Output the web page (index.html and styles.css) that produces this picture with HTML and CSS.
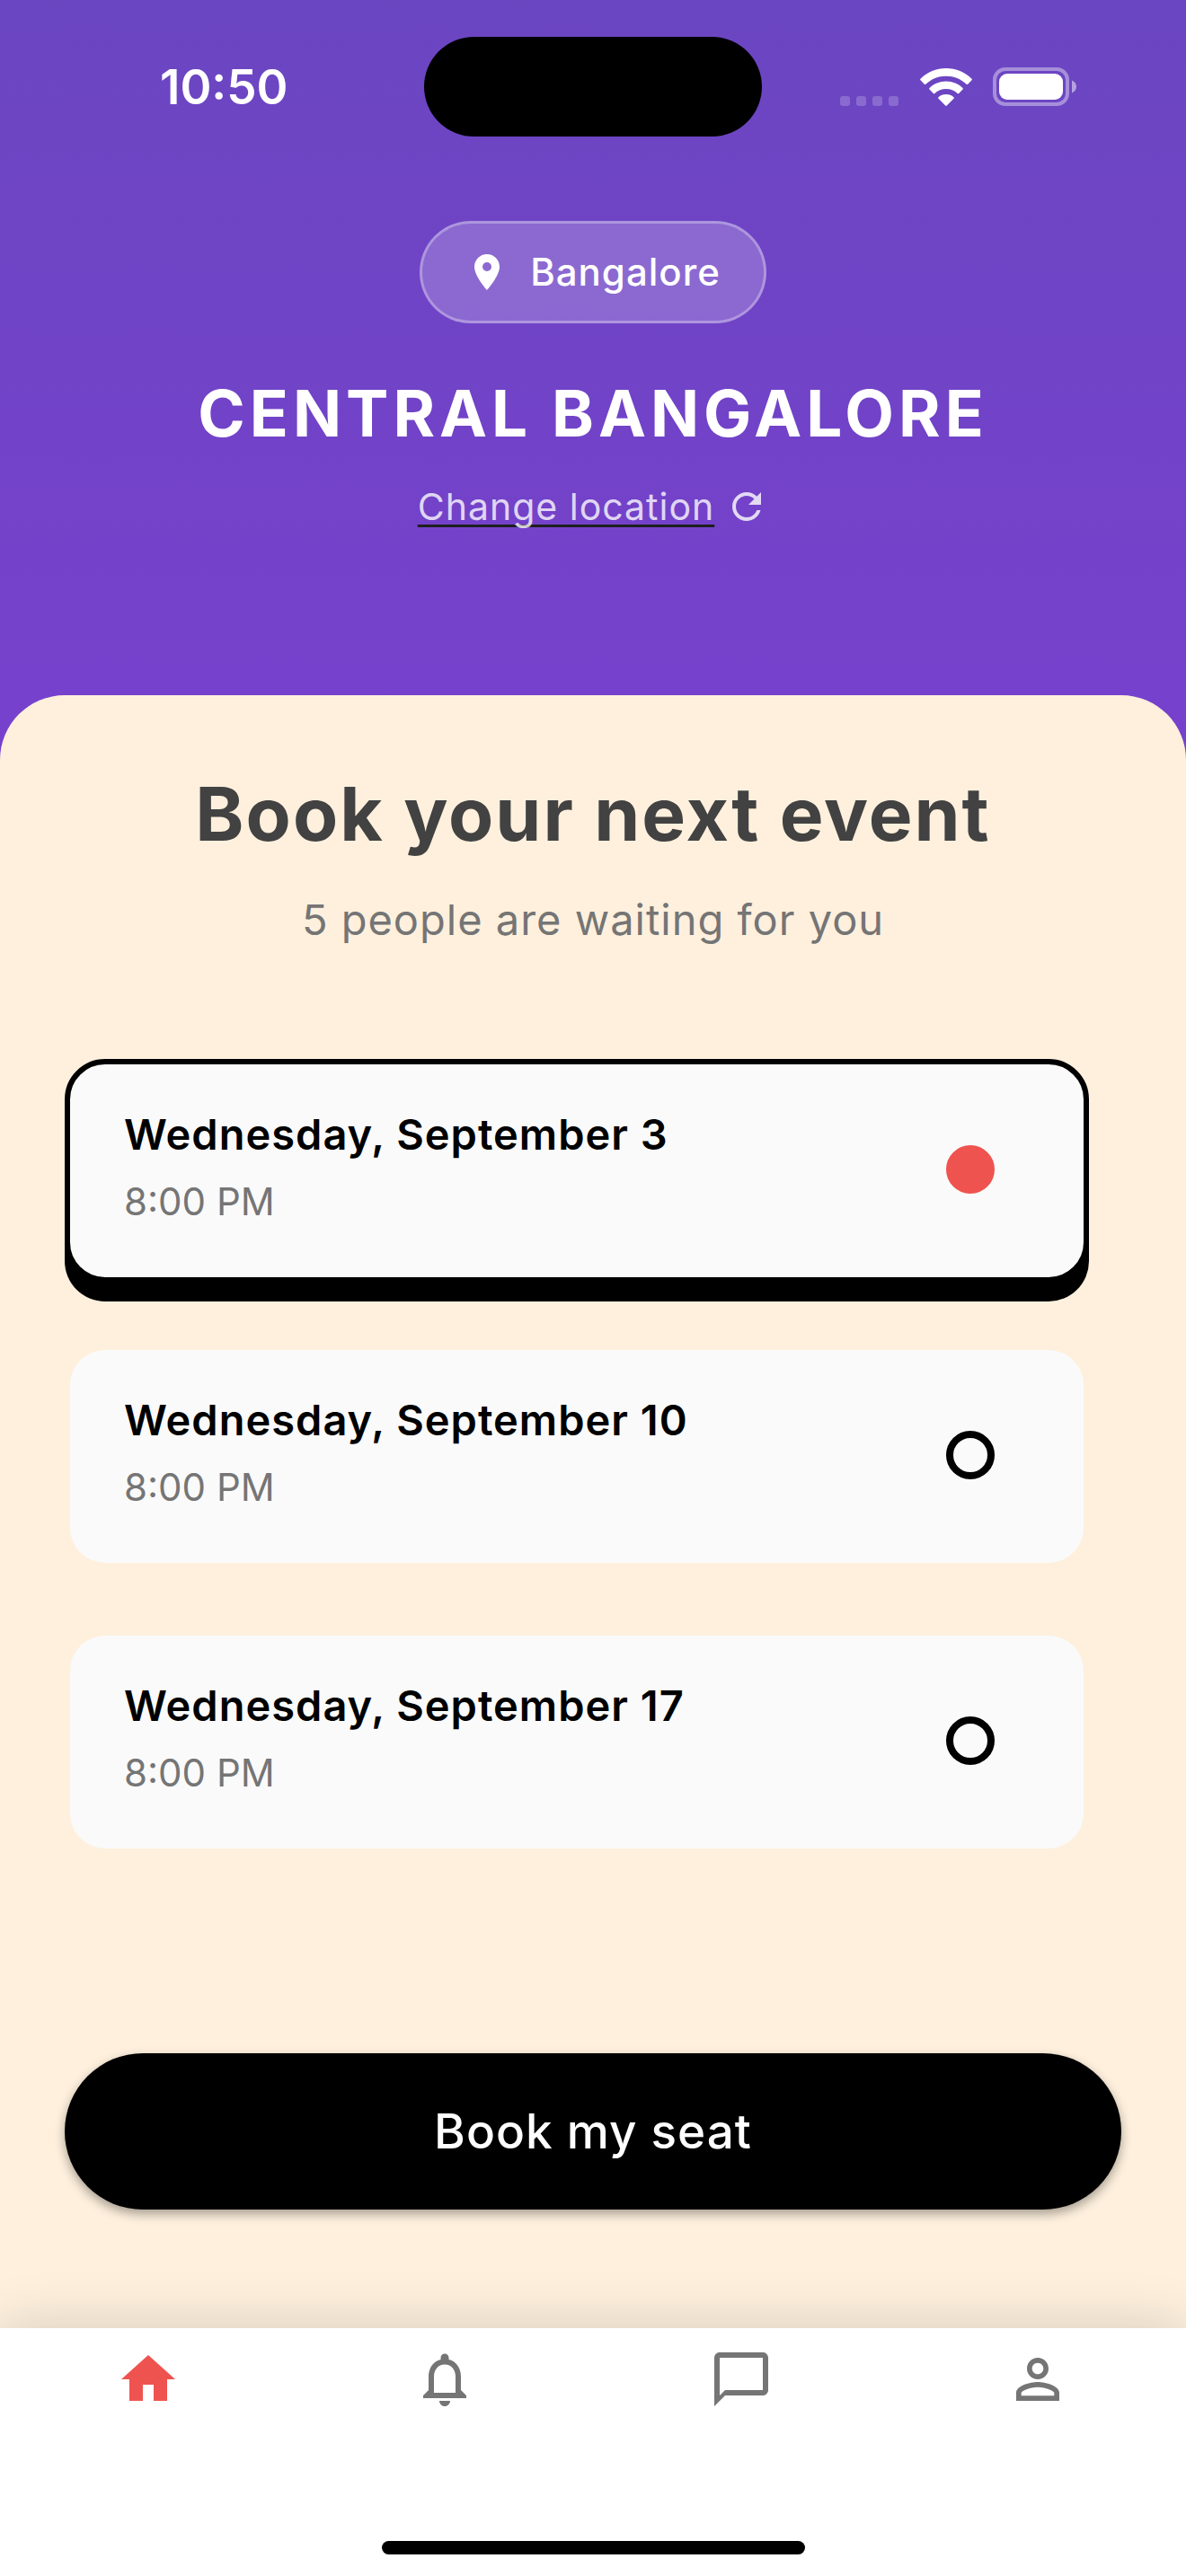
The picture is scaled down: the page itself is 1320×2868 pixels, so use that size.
FILE: index.html
```html
<!DOCTYPE html>
<html lang="en">
<head>
<meta charset="utf-8">
<meta name="viewport" content="width=device-width, initial-scale=1">
<title>Book your next event</title>
<link rel="stylesheet" href="styles.css">
</head>
<body>
<div class="screen">
  <div class="status">
    <time class="status-time">10:50</time>
    <span class="island"></span>
    <div class="status-icons">
      <svg class="signal" viewBox="0 0 66 11" aria-hidden="true"><rect width="11" height="11" rx="3"/><rect x="18" width="11" height="11" rx="3"/><rect x="36" width="11" height="11" rx="3"/><rect x="54" width="11" height="11" rx="3"/></svg>
      <svg class="wifi" viewBox="0 0 58 42" aria-hidden="true"><path d="M29 0C40 0 50 4.300 57.500 11.700Q58.300 12.500 57.500 13.300L53.200 17.700Q52.400 18.500 51.600 17.700C45.500 11.900 37.600 8.700 29 8.700S12.500 11.900 6.400 17.700Q5.600 18.500 4.800 17.700L.5 13.300Q-.3 12.500 .5 11.700C8 4.300 18 0 29 0zM29 14.500C36.200 14.500 42.700 17.300 47.500 21.900Q48.300 22.700 47.500 23.500L43.200 27.900Q42.400 28.700 41.600 27.900C38.200 24.900 33.800 23.100 29 23.100S19.800 24.900 16.400 27.900Q15.600 28.700 14.800 27.900L10.500 23.500Q9.700 22.700 10.500 21.900C15.300 17.300 21.800 14.500 29 14.500zM29 29C32.400 29 35.300 30.200 37.500 32.200Q38.300 33 37.500 33.800L29.800 41.500Q29 42.300 28.200 41.500L20.500 33.800Q19.700 33 20.500 32.200C22.700 30.200 25.600 29 29 29z"/></svg>
      <svg class="battery" viewBox="0 0 94 43" aria-hidden="true"><rect class="battery-shell" x="2" y="2" width="81" height="39" rx="12"/><rect x="7" y="7" width="71" height="29" rx="9"/><path class="battery-tip" d="M88 14.500c3 1.200 5 3.900 5 7s-2 5.800-5 7z"/></svg>
    </div>
  </div>

  <header class="header">
    <div class="pill">
      <svg class="icon-small" viewBox="0 0 24 24" aria-hidden="true"><path d="M12 2C8.130 2 5 5.130 5 9c0 5.250 7 13 7 13s7-7.750 7-13c0-3.870-3.130-7-7-7zm0 9.500a2.500 2.500 0 0 1 0-5 2.500 2.500 0 0 1 0 5z"/></svg>
      <span class="pill-text">Bangalore</span>
    </div>
    <h1 class="area">CENTRAL BANGALORE</h1>
    <a class="change" href="#location">
      <span class="change-text">Change location</span>
      <svg class="icon-small" viewBox="0 0 24 24" aria-hidden="true"><path d="M17.650 6.350C16.200 4.900 14.210 4 12 4c-4.420 0-7.990 3.580-7.990 8s3.570 8 7.990 8c3.730 0 6.840-2.550 7.730-6h-2.080c-.820 2.330-3.040 4-5.650 4-3.310 0-6-2.690-6-6s2.690-6 6-6c1.660 0 3.140.690 4.220 1.780L13 11h7V4l-2.350 2.350z"/></svg>
    </a>
  </header>

  <main class="panel">
    <h2 class="title">Book your next event</h2>
    <p class="subtitle">5 people are waiting for you</p>

    <form class="form">
      <div class="slots">
        <label class="slot">
          <span class="slot-info"><span class="slot-date">Wednesday, September 3</span><span class="slot-time">8:00 PM</span></span>
          <input class="slot-radio" type="radio" name="slot" checked>
        </label>
        <label class="slot">
          <span class="slot-info"><span class="slot-date">Wednesday, September 10</span><span class="slot-time">8:00 PM</span></span>
          <input class="slot-radio" type="radio" name="slot">
        </label>
        <label class="slot">
          <span class="slot-info"><span class="slot-date">Wednesday, September 17</span><span class="slot-time">8:00 PM</span></span>
          <input class="slot-radio" type="radio" name="slot">
        </label>
      </div>
      <button class="book" type="button">Book my seat</button>
    </form>
  </main>

  <footer class="bottom">
    <nav class="tabs">
      <a class="tab tab-active" href="#home" aria-label="Home"><svg class="icon" viewBox="0 0 24 24"><path d="M10 20v-6h4v6h5v-8h3L12 3 2 12h3v8z"/></svg></a>
      <a class="tab" href="#notifications" aria-label="Notifications"><svg class="icon" viewBox="0 0 24 24"><path d="M12 22c1.100 0 2-.900 2-2h-4c0 1.100.900 2 2 2zm6-6v-5c0-3.070-1.630-5.640-4.500-6.320V4c0-.830-.670-1.500-1.500-1.500s-1.500.670-1.500 1.500v.680C7.640 5.360 6 7.920 6 11v5l-2 2v1h16v-1l-2-2zm-2 1H8v-6c0-2.480 1.510-4.500 4-4.500s4 2.020 4 4.500v6z"/></svg></a>
      <a class="tab" href="#messages" aria-label="Messages"><svg class="icon" viewBox="0 0 24 24"><path d="M20 2H4c-1.100 0-2 .900-2 2v18l4-4h14c1.100 0 2-.900 2-2V4c0-1.100-.900-2-2-2zm0 14H6l-2 2V4h16v12z"/></svg></a>
      <a class="tab" href="#profile" aria-label="Profile"><svg class="icon" viewBox="0 0 24 24"><path d="M12 5.900c1.160 0 2.100.940 2.100 2.100s-.940 2.100-2.100 2.100S9.900 9.160 9.900 8s.940-2.100 2.100-2.100m0 9c2.970 0 6.100 1.460 6.100 2.100v1.100H5.900V17c0-.640 3.130-2.100 6.100-2.100M12 4C9.790 4 8 5.790 8 8s1.790 4 4 4 4-1.790 4-4-1.790-4-4-4zm0 9c-2.670 0-8 1.340-8 4v3h16v-3c0-2.660-5.330-4-8-4z"/></svg></a>
    </nav>
    <span class="home-bar"></span>
  </footer>
</div>
</body>
</html>
```

FILE: styles.css
```css
* {
  box-sizing: border-box;
}

body {
  margin: 0;
  font-family: Inter, "Liberation Sans", sans-serif;
}

.screen {
  display: flex;
  flex-direction: column;
  min-height: 100vh;
  background: linear-gradient(#6b46c1, #9333ea);
}

/* Status bar */
.status {
  display: grid;
  grid-template-columns: 1fr auto 1fr;
  align-items: center;
  height: 177px;
  padding: 16px 121px 0;
  color: #fff;
}

.status-time {
  padding-left: 57px;
  font-size: 53px;
  font-weight: 600;
  line-height: 60px;
}

.island {
  width: 376px;
  height: 111px;
  border-radius: 56px;
  background: #000;
}

.status-icons {
  display: flex;
  justify-content: flex-end;
  align-items: flex-end;
  gap: 23px;
  fill: #fff;
}

.signal {
  width: 66px;
  height: 11px;
  opacity: 0.2;
}

.wifi {
  width: 58px;
  height: 42px;
}

.battery {
  width: 94px;
  height: 43px;
}

.battery-shell {
  fill: none;
  stroke: #fff;
  stroke-width: 4;
  opacity: 0.4;
}

.battery-tip {
  opacity: 0.5;
}

/* Location header */
.header {
  display: flex;
  flex-direction: column;
  align-items: center;
  padding: 69px 72px 186px;
  color: #fff;
}

.icon-small {
  width: 48px;
  height: 48px;
  fill: currentColor;
}

.pill {
  display: flex;
  align-items: center;
  gap: 24px;
  padding: 27px 48px;
  border: 3px solid rgba(255, 255, 255, 0.3);
  border-radius: 60px;
  background: rgba(255, 255, 255, 0.2);
}

.pill-text {
  font-size: 42px;
  font-weight: 500;
  line-height: 54px;
  letter-spacing: 1px;
}

.area {
  margin: 56px 0 36px;
  font-size: 71px;
  font-weight: 700;
  line-height: 88px;
  letter-spacing: 5px;
  text-align: center;
}

.change {
  display: flex;
  align-items: center;
  gap: 12px;
  color: rgba(255, 255, 255, 0.8);
  text-decoration: none;
}

.change-text {
  font-size: 41px;
  line-height: 48px;
  letter-spacing: 1px;
  text-decoration: underline 3px #1f1f1f;
  text-decoration-skip-ink: none;
  text-underline-offset: 5px;
}

/* Booking panel */
.panel {
  display: flex;
  flex: 1;
  flex-direction: column;
  padding: 84px 72px 132px;
  border-radius: 72px 72px 0 0;
  background: #fef0dd;
}

.title {
  margin: 0;
  color: #424242;
  font-size: 82px;
  font-weight: 700;
  line-height: 98px;
  letter-spacing: 2px;
  text-align: center;
}

.subtitle {
  margin: 38px 0 125px;
  color: #757575;
  font-size: 47px;
  line-height: 60px;
  letter-spacing: 1px;
  text-align: center;
}

.form {
  display: flex;
  flex: 1;
  flex-direction: column;
}

.slots {
  display: flex;
  flex-direction: column;
  gap: 69px;
  padding-right: 36px;
}

.slot {
  display: flex;
  align-items: center;
  justify-content: space-between;
  min-height: 249px;
  padding: 48px 99px 51px 60px;
  border: 6px solid transparent;
  border-radius: 45px;
  background: #fafafa padding-box;
}

.slot:has(:checked) {
  border-color: #000;
  box-shadow: 0 21px #000;
}

.slot-info {
  display: flex;
  flex-direction: column;
  gap: 18px;
}

.slot-date {
  color: #000;
  font-size: 47px;
  font-weight: 600;
  line-height: 54px;
  letter-spacing: 1px;
}

.slot-time {
  color: #757575;
  font-size: 42px;
  line-height: 60px;
}

.slot-radio {
  appearance: none;
  width: 54px;
  height: 54px;
  margin: 0;
  border: 8px solid #000;
  border-radius: 50%;
}

.slot-radio:checked {
  border-color: #ef5350;
  background: #ef5350;
}

.book {
  width: 100%;
  margin-top: auto;
  padding: 54px;
  border: 0;
  border-radius: 87px;
  background: #000;
  box-shadow: 0 5px 12px rgba(0, 0, 0, 0.35);
  color: #fff;
  font-family: inherit;
  font-size: 53px;
  font-weight: 500;
  line-height: 66px;
  letter-spacing: 1px;
}

/* Bottom navigation */
.bottom {
  display: flex;
  flex-direction: column;
  align-items: center;
  gap: 144px;
  padding: 21px 0 24px;
  background: #fff;
  box-shadow: 0 0 60px rgba(0, 0, 0, 0.16);
}

.tabs {
  display: grid;
  grid-template-columns: repeat(4, 1fr);
  width: 100%;
}

.tab {
  display: flex;
  justify-content: center;
  color: #757575;
}

.tab-active {
  color: #ef5350;
}

.icon {
  width: 72px;
  height: 72px;
  fill: currentColor;
}

.home-bar {
  width: 471px;
  height: 15px;
  border-radius: 8px;
  background: #000;
}
```
